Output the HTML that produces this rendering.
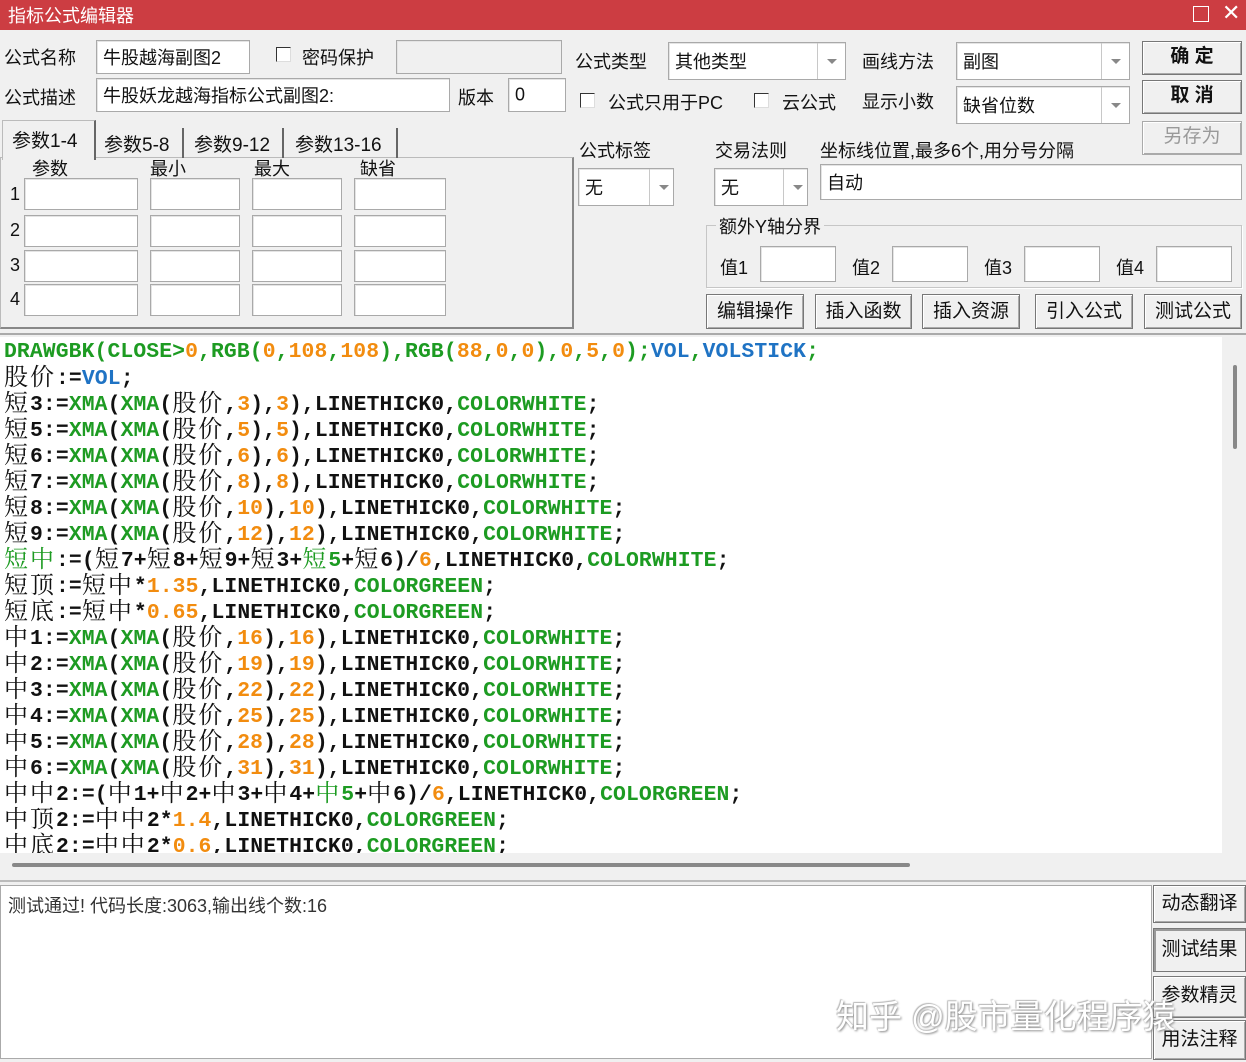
<!DOCTYPE html>
<html><head><meta charset="utf-8"><style>
*{box-sizing:border-box;margin:0;padding:0}
body{width:1246px;height:1062px;background:#f0f0f0;position:relative;overflow:hidden;font-family:"Liberation Sans","Noto Sans CJK SC",sans-serif;font-size:18px;color:#111}
.a{position:absolute;white-space:nowrap}
.in{position:absolute;background:#fff;border:1px solid #a9a9a9;box-shadow:inset 1px 1px 0 #e4e4e4}
.in span{position:absolute;left:6px;top:50%;transform:translateY(-50%)}
.cb{position:absolute;width:15px;height:15px;background:#fff;border:1px solid #333;border-right-color:#ddd;border-bottom-color:#ddd}
.dd{position:absolute;right:0;top:0;bottom:0;width:28px;border-left:1px solid #c8c8c8}
.dd:after{content:"";position:absolute;left:9px;top:50%;margin-top:-2px;border:5px solid transparent;border-top:5px solid #888;border-bottom:0}
.btn{position:absolute;background:#f0f0f0;border:1px solid #777;box-shadow:inset 1px 1px 0 #fff,inset -1px -1px 0 #aaa;text-align:center;font-size:19px}
.code{position:absolute;left:0;top:337px;width:1222px;height:516px;background:#fff;overflow:hidden;font-family:"Liberation Mono",monospace;font-weight:bold;font-size:21.4px;letter-spacing:0.1px;line-height:26px;padding-left:4px;padding-top:2px}
.code div{height:26px;white-space:pre}
.c{font-family:"Noto Serif CJK SC","Noto Sans CJK SC",serif;font-weight:normal;font-size:24px;letter-spacing:2px;line-height:20px;vertical-align:-1px}
.g{color:#1d9b22}.o{color:#f28c0f}.b{color:#1f73c4}
</style></head><body>
<div class="a" style="left:0;top:0;width:1246px;height:30px;background:#cc3d42"></div>
<div class="a" style="left:8px;top:2px;color:#fff;font-size:18px">指标公式编辑器</div>
<div class="a" style="left:1193px;top:6px;width:16px;height:16px;border:1.5px solid #fff"></div>
<div class="a" style="left:1222px;top:0px;color:#fff;font-size:22px">✕</div>

<div class="a" style="left:4px;top:44px">公式名称</div>
<div class="in" style="left:96px;top:40px;width:154px;height:34px"><span>牛股越海副图2</span></div>
<div class="cb" style="left:276px;top:47px"></div>
<div class="a" style="left:302px;top:44px">密码保护</div>
<div class="in" style="left:396px;top:40px;width:166px;height:34px;background:#f0f0f0"></div>
<div class="a" style="left:4px;top:84px">公式描述</div>
<div class="in" style="left:96px;top:78px;width:354px;height:34px"><span>牛股妖龙越海指标公式副图2:</span></div>
<div class="a" style="left:458px;top:84px">版本</div>
<div class="in" style="left:508px;top:78px;width:58px;height:34px"><span>0</span></div>

<div class="a" style="left:0;top:157px;width:574px;height:172px;border:1px solid #bbb;border-right:2px solid #888;border-bottom:2px solid #888;background:#f0f0f0"></div>
<div class="a" style="left:2px;top:120px;width:94px;height:40px;border:1px solid #bbb;border-bottom:none;border-right:2px solid #666;background:#f0f0f0"></div>
<div class="a" style="left:12px;top:126px;font-size:19px">参数1-4</div>
<div class="a" style="left:100px;top:128px;width:84px;height:30px;border-right:2px solid #666"></div>
<div class="a" style="left:104px;top:130px;font-size:19px">参数5-8</div>
<div class="a" style="left:190px;top:128px;width:94px;height:30px;border-right:2px solid #666"></div>
<div class="a" style="left:194px;top:130px;font-size:19px">参数9-12</div>
<div class="a" style="left:292px;top:128px;width:106px;height:30px;border-right:2px solid #666"></div>
<div class="a" style="left:295px;top:130px;font-size:19px">参数13-16</div>
<div class="a" style="left:32px;top:155px">参数</div><div class="a" style="left:150px;top:155px">最小</div><div class="a" style="left:254px;top:155px">最大</div><div class="a" style="left:360px;top:155px">缺省</div>
<div class="a" style="left:10px;top:184px">1</div><div class="a" style="left:10px;top:220px">2</div><div class="a" style="left:10px;top:255px">3</div><div class="a" style="left:10px;top:289px">4</div>
<div class="in" style="left:24px;top:178px;width:114px;height:32px"></div><div class="in" style="left:150px;top:178px;width:90px;height:32px"></div><div class="in" style="left:252px;top:178px;width:90px;height:32px"></div><div class="in" style="left:354px;top:178px;width:92px;height:32px"></div>
<div class="in" style="left:24px;top:215px;width:114px;height:32px"></div><div class="in" style="left:150px;top:215px;width:90px;height:32px"></div><div class="in" style="left:252px;top:215px;width:90px;height:32px"></div><div class="in" style="left:354px;top:215px;width:92px;height:32px"></div>
<div class="in" style="left:24px;top:250px;width:114px;height:32px"></div><div class="in" style="left:150px;top:250px;width:90px;height:32px"></div><div class="in" style="left:252px;top:250px;width:90px;height:32px"></div><div class="in" style="left:354px;top:250px;width:92px;height:32px"></div>
<div class="in" style="left:24px;top:284px;width:114px;height:32px"></div><div class="in" style="left:150px;top:284px;width:90px;height:32px"></div><div class="in" style="left:252px;top:284px;width:90px;height:32px"></div><div class="in" style="left:354px;top:284px;width:92px;height:32px"></div>

<div class="a" style="left:575px;top:48px">公式类型</div>
<div class="in" style="left:668px;top:42px;width:178px;height:38px"><span>其他类型</span><div class="dd"></div></div>
<div class="a" style="left:862px;top:48px">画线方法</div>
<div class="in" style="left:956px;top:42px;width:174px;height:38px"><span>副图</span><div class="dd"></div></div>
<div class="btn" style="left:1142px;top:41px;width:100px;height:34px;line-height:30px;font-weight:bold">确 定</div>
<div class="btn" style="left:1142px;top:80px;width:100px;height:34px;line-height:30px;font-weight:bold">取 消</div>
<div class="btn" style="left:1142px;top:121px;width:100px;height:34px;line-height:30px;color:#999;border-color:#aaa">另存为</div>
<div class="cb" style="left:580px;top:93px"></div>
<div class="a" style="left:608px;top:89px">公式只用于PC</div>
<div class="cb" style="left:754px;top:93px"></div>
<div class="a" style="left:782px;top:89px">云公式</div>
<div class="a" style="left:862px;top:88px">显示小数</div>
<div class="in" style="left:956px;top:86px;width:174px;height:38px"><span>缺省位数</span><div class="dd"></div></div>

<div class="a" style="left:579px;top:137px">公式标签</div>
<div class="a" style="left:715px;top:137px">交易法则</div>
<div class="a" style="left:820px;top:137px">坐标线位置,最多6个,用分号分隔</div>
<div class="in" style="left:578px;top:168px;width:96px;height:38px"><span>无</span><div class="dd" style="width:24px"></div></div>
<div class="in" style="left:714px;top:168px;width:94px;height:38px"><span>无</span><div class="dd" style="width:24px"></div></div>
<div class="in" style="left:820px;top:164px;width:422px;height:36px"><span>自动</span></div>
<div class="a" style="left:706px;top:225px;width:536px;height:63px;border:1px solid #c6c6c6;box-shadow:1px 1px 0 #fff"></div>
<div class="a" style="left:716px;top:213px;background:#f0f0f0;padding:0 3px">额外Y轴分界</div>
<div class="a" style="left:720px;top:254px">值1</div><div class="in" style="left:760px;top:246px;width:76px;height:36px"></div>
<div class="a" style="left:852px;top:254px">值2</div><div class="in" style="left:892px;top:246px;width:76px;height:36px"></div>
<div class="a" style="left:984px;top:254px">值3</div><div class="in" style="left:1024px;top:246px;width:76px;height:36px"></div>
<div class="a" style="left:1116px;top:254px">值4</div><div class="in" style="left:1156px;top:246px;width:76px;height:36px"></div>
<div class="btn" style="left:706px;top:294px;width:98px;height:35px;line-height:33px">编辑操作</div>
<div class="btn" style="left:815px;top:294px;width:97px;height:35px;line-height:33px">插入函数</div>
<div class="btn" style="left:922px;top:294px;width:98px;height:35px;line-height:33px">插入资源</div>
<div class="btn" style="left:1035px;top:294px;width:98px;height:35px;line-height:33px">引入公式</div>
<div class="btn" style="left:1144px;top:294px;width:98px;height:35px;line-height:33px">测试公式</div>
<div class="a" style="left:0;top:333px;width:1246px;height:2px;background:#aaa"></div>

<div class="code">
<div class="g">DRAWGBK(CLOSE&gt;<span class="o">0</span>,RGB(<span class="o">0</span>,<span class="o">108</span>,<span class="o">108</span>),RGB(<span class="o">88</span>,<span class="o">0</span>,<span class="o">0</span>),<span class="o">0</span>,<span class="o">5</span>,<span class="o">0</span>);<span class="b">VOL</span>,<span class="b">VOLSTICK</span>;</div>
<div><span class="c">股价</span>:=<span class="b">VOL</span>;</div>
<div><span class="c">短</span>3:=<span class="g">XMA</span>(<span class="g">XMA</span>(<span class="c">股价</span>,<span class="o">3</span>),<span class="o">3</span>),LINETHICK0,<span class="g">COLORWHITE</span>;</div>
<div><span class="c">短</span>5:=<span class="g">XMA</span>(<span class="g">XMA</span>(<span class="c">股价</span>,<span class="o">5</span>),<span class="o">5</span>),LINETHICK0,<span class="g">COLORWHITE</span>;</div>
<div><span class="c">短</span>6:=<span class="g">XMA</span>(<span class="g">XMA</span>(<span class="c">股价</span>,<span class="o">6</span>),<span class="o">6</span>),LINETHICK0,<span class="g">COLORWHITE</span>;</div>
<div><span class="c">短</span>7:=<span class="g">XMA</span>(<span class="g">XMA</span>(<span class="c">股价</span>,<span class="o">8</span>),<span class="o">8</span>),LINETHICK0,<span class="g">COLORWHITE</span>;</div>
<div><span class="c">短</span>8:=<span class="g">XMA</span>(<span class="g">XMA</span>(<span class="c">股价</span>,<span class="o">10</span>),<span class="o">10</span>),LINETHICK0,<span class="g">COLORWHITE</span>;</div>
<div><span class="c">短</span>9:=<span class="g">XMA</span>(<span class="g">XMA</span>(<span class="c">股价</span>,<span class="o">12</span>),<span class="o">12</span>),LINETHICK0,<span class="g">COLORWHITE</span>;</div>
<div><span class="c g">短中</span>:=(<span class="c">短</span>7+<span class="c">短</span>8+<span class="c">短</span>9+<span class="c">短</span>3+<span class="c g">短</span><span class="g">5</span>+<span class="c">短</span>6)/<span class="o">6</span>,LINETHICK0,<span class="g">COLORWHITE</span>;</div>
<div><span class="c">短顶</span>:=<span class="c">短中</span>*<span class="o">1.35</span>,LINETHICK0,<span class="g">COLORGREEN</span>;</div>
<div><span class="c">短底</span>:=<span class="c">短中</span>*<span class="o">0.65</span>,LINETHICK0,<span class="g">COLORGREEN</span>;</div>
<div><span class="c">中</span>1:=<span class="g">XMA</span>(<span class="g">XMA</span>(<span class="c">股价</span>,<span class="o">16</span>),<span class="o">16</span>),LINETHICK0,<span class="g">COLORWHITE</span>;</div>
<div><span class="c">中</span>2:=<span class="g">XMA</span>(<span class="g">XMA</span>(<span class="c">股价</span>,<span class="o">19</span>),<span class="o">19</span>),LINETHICK0,<span class="g">COLORWHITE</span>;</div>
<div><span class="c">中</span>3:=<span class="g">XMA</span>(<span class="g">XMA</span>(<span class="c">股价</span>,<span class="o">22</span>),<span class="o">22</span>),LINETHICK0,<span class="g">COLORWHITE</span>;</div>
<div><span class="c">中</span>4:=<span class="g">XMA</span>(<span class="g">XMA</span>(<span class="c">股价</span>,<span class="o">25</span>),<span class="o">25</span>),LINETHICK0,<span class="g">COLORWHITE</span>;</div>
<div><span class="c">中</span>5:=<span class="g">XMA</span>(<span class="g">XMA</span>(<span class="c">股价</span>,<span class="o">28</span>),<span class="o">28</span>),LINETHICK0,<span class="g">COLORWHITE</span>;</div>
<div><span class="c">中</span>6:=<span class="g">XMA</span>(<span class="g">XMA</span>(<span class="c">股价</span>,<span class="o">31</span>),<span class="o">31</span>),LINETHICK0,<span class="g">COLORWHITE</span>;</div>
<div><span class="c">中中</span>2:=(<span class="c">中</span>1+<span class="c">中</span>2+<span class="c">中</span>3+<span class="c">中</span>4+<span class="c g">中</span><span class="g">5</span>+<span class="c">中</span>6)/<span class="o">6</span>,LINETHICK0,<span class="g">COLORGREEN</span>;</div>
<div><span class="c">中顶</span>2:=<span class="c">中中</span>2*<span class="o">1.4</span>,LINETHICK0,<span class="g">COLORGREEN</span>;</div>
<div><span class="c">中底</span>2:=<span class="c">中中</span>2*<span class="o">0.6</span>,LINETHICK0,<span class="g">COLORGREEN</span>;</div>
</div>
<div class="a" style="left:1233px;top:365px;width:4px;height:84px;background:#888;border-radius:2px"></div>
<div class="a" style="left:12px;top:863px;width:898px;height:4px;background:#888;border-radius:2px"></div>
<div class="a" style="left:0;top:880px;width:1246px;height:2px;background:#bbb"></div>

<div class="a" style="left:0;top:885px;width:1152px;height:174px;background:#fff;border:1px solid #aaa"></div>
<div class="a" style="left:8px;top:892px;font-size:18px;color:#333">测试通过! 代码长度:3063,输出线个数:16</div>
<div class="btn" style="left:1153px;top:885px;width:93px;height:38px;line-height:36px">动态翻译</div>
<div class="btn" style="left:1153px;top:928px;width:93px;height:44px;line-height:42px;box-shadow:inset 2px 2px 0 #999">测试结果</div>
<div class="btn" style="left:1153px;top:976px;width:93px;height:42px;line-height:38px">参数精灵</div>
<div class="btn" style="left:1153px;top:1020px;width:93px;height:40px;line-height:38px">用法注释</div>
<div class="a" style="left:836px;top:990px;font-size:33px;color:#fff;text-shadow:1px 1px 2px #888,-1px -1px 1px #bbb">知乎 @股市量化程序猿</div>
</body></html>
